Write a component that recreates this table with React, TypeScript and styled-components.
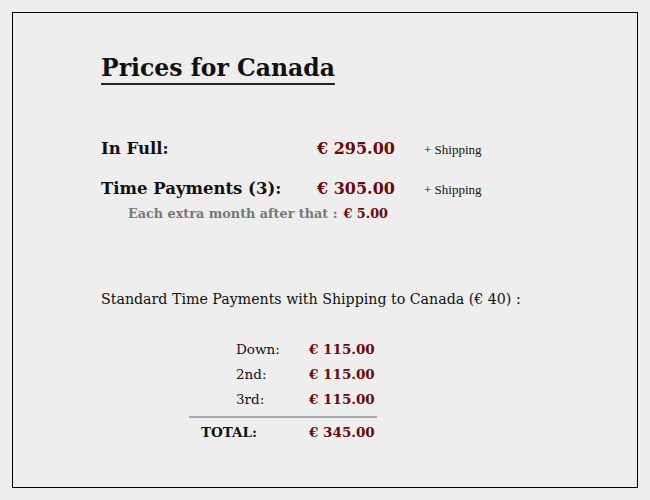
import React from "react";
import styled, { createGlobalStyle } from "styled-components";

const Global = createGlobalStyle`
  html, body { margin: 0; padding: 0; background: #eeeeee; }
  body { font-family: "DejaVu Serif", "Liberation Serif", serif; color: #111; }
`;

const Page = styled.div`
  padding: 12px;
  width: 650px;
  height: 500px;
  box-sizing: border-box;
`;

const Frame = styled.div`
  border: 1px solid #000;
  height: 476px;
  box-sizing: border-box;
  padding: 40px 0 0 88px;
`;

const Title = styled.h1`
  display: inline-block;
  margin: 0;
  font-size: 23.5px;
  font-weight: bold;
  line-height: 30px;
  border-bottom: 2px solid #222;
`;

const PriceGrid = styled.div`
  margin-top: 54px;
  display: grid;
  grid-template-columns: 216px 107px auto;
  align-items: baseline;
  row-gap: 21px;
`;

const Label = styled.div`
  font-size: 16.5px;
  font-weight: bold;
`;

const Price = styled.div<{ $size?: number }>`
  font-size: ${(p) => p.$size ?? 16}px;
  font-weight: bold;
  color: #6b0a0a;
`;

const Note = styled.div`
  font-family: "Liberation Serif", serif;
  font-size: 13px;
`;

const Extra = styled.div`
  margin: 8px 0 0 27px;
  display: flex;
  align-items: baseline;
  gap: 6px;
  font-size: 12.8px;
  font-weight: bold;
  color: #777;
`;

const Lead = styled.p`
  margin: 70px 0 0 0;
  font-size: 14.2px;
`;

const Schedule = styled.div`
  margin: 34px 0 0 88px;
  width: 188px;
`;

const SRow = styled.div`
  display: grid;
  grid-template-columns: 120px auto;
  align-items: baseline;
  height: 25px;
  font-size: 13.5px;
`;

const SLabel = styled.span<{ $indent?: number }>`
  padding-left: ${(p) => p.$indent ?? 47}px;
`;

const Total = styled(SRow)`
  margin-top: 0;
  border-top: 2px solid #aaa;
  padding-top: 6px;
  font-weight: bold;
`;

const payments = ["Down:", "2nd:", "3rd:"];

export default function App() {
  return (
    <>
      <Global />
      <Page>
        <Frame>
          <Title>Prices for Canada</Title>
          <PriceGrid>
            <Label>In Full:</Label>
            <Price>€ 295.00</Price>
            <Note>+ Shipping</Note>
            <Label>Time Payments (3):</Label>
            <Price>€ 305.00</Price>
            <Note>+ Shipping</Note>
          </PriceGrid>
          <Extra>
            <span>Each extra month after that :</span>
            <Price $size={12.8}>€ 5.00</Price>
          </Extra>
          <Lead>Standard Time Payments with Shipping to Canada (€ 40) :</Lead>
          <Schedule>
            {payments.map((p) => (
              <SRow key={p}>
                <SLabel>{p}</SLabel>
                <Price $size={13.5}>€ 115.00</Price>
              </SRow>
            ))}
            <Total>
              <SLabel $indent={12}>TOTAL:</SLabel>
              <Price $size={13.5}>€ 345.00</Price>
            </Total>
          </Schedule>
        </Frame>
      </Page>
    </>
  );
}
